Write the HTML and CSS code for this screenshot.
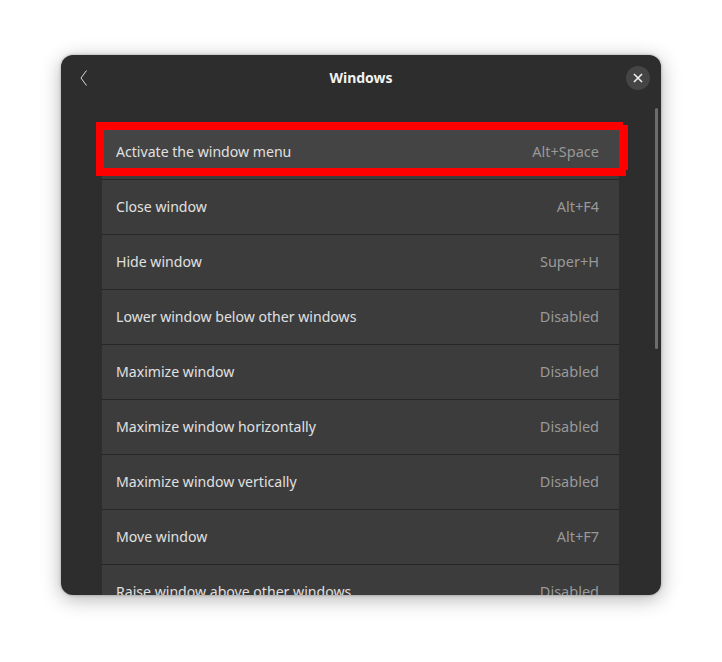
FILE: index.html
```html
<!DOCTYPE html>
<html lang="en">
<head>
<meta charset="utf-8">
<title>Windows</title>
<link rel="stylesheet" href="styles.css">
</head>
<body>
<main class="window">
  <header class="header">
    <button class="back" aria-label="Back">
      <svg width="8" height="16" viewBox="0 0 8 16"><path d="M6.500 .5 1 8l5.500 7.500" fill="none" stroke="#d8d8d8" stroke-width="1"/></svg>
    </button>
    <h1 class="title">Windows</h1>
    <button class="close" aria-label="Close">
      <svg width="10" height="10" viewBox="0 0 10 10"><path d="M1 1l8 8M9 1l-8 8" fill="none" stroke="#f0f0f0" stroke-width="1.600"/></svg>
    </button>
  </header>
  <div class="scroller">
    <ul class="list">
      <li class="row row-active"><span>Activate the window menu</span><span class="key">Alt+Space</span></li>
      <li class="row"><span>Close window</span><span class="key">Alt+F4</span></li>
      <li class="row"><span>Hide window</span><span class="key">Super+H</span></li>
      <li class="row"><span>Lower window below other windows</span><span class="key">Disabled</span></li>
      <li class="row"><span>Maximize window</span><span class="key">Disabled</span></li>
      <li class="row"><span>Maximize window horizontally</span><span class="key">Disabled</span></li>
      <li class="row"><span>Maximize window vertically</span><span class="key">Disabled</span></li>
      <li class="row"><span>Move window</span><span class="key">Alt+F7</span></li>
      <li class="row"><span>Raise window above other windows</span><span class="key">Disabled</span></li>
    </ul>
    <div class="scrollbar"></div>
  </div>
  <svg class="annotation" width="532" height="54" viewBox="0 0 532 54"><path fill-rule="evenodd" fill="#ff0000" d="M0 0H527V3H532V48H530V54H0ZM8 8V46H523V8Z"/></svg>
</main>
</body>
</html>
```
FILE: styles.css
```css
* { box-sizing: border-box; }
html, body { margin: 0; height: 100%; background: #fff; }
body {
  padding: 55px 61px 67px;
  font-family: "Noto Sans", sans-serif;
  font-size: 14.1px;
  color: #e0e0e0;
  overflow: hidden;
}
.window {
  position: relative;
  width: 600px;
  height: 540px;
  display: flex;
  flex-direction: column;
  background: #2d2d2d;
  border-radius: 12px;
  overflow: hidden;
  box-shadow: 0 4px 20px rgba(0,0,0,.3), 0 0 3px rgba(0,0,0,.3);
}
.header {
  position: relative;
  flex: none;
  height: 46px;
  padding-bottom: 2px;
  display: flex;
  align-items: center;
  justify-content: center;
}
.title { margin: 0; font-size: 14px; font-weight: 700; color: #f2f2f2; }
.back, .close { position: absolute; padding: 0; border: 0; display: flex; align-items: center; justify-content: center; }
.back { left: 19px; top: 15px; width: 8px; height: 16px; background: none; }
.close { right: 11px; top: 11px; width: 24px; height: 24px; border-radius: 50%; background: #454545; }
.scroller { position: relative; flex: 1; min-height: 0; overflow: hidden; padding: 24px 42px 0 41px; }
.list { margin: 0; padding: 0; list-style: none; }
.row {
  height: 55px;
  padding: 0 20px 2px 14px;
  display: flex;
  align-items: center;
  justify-content: space-between;
  background: #3c3c3c;
  border-bottom: 1px solid #262626;
}
.row-active { background: linear-gradient(#444 44px, #3c3c3c 44px); }
.key { color: #999; font-size: 14.500px; }
.scrollbar { position: absolute; left: 594px; top: 7px; width: 3px; height: 241px; border-radius: 2px; background: #6c6c6c; }
.annotation { position: absolute; left: 35px; top: 67px; }
```
